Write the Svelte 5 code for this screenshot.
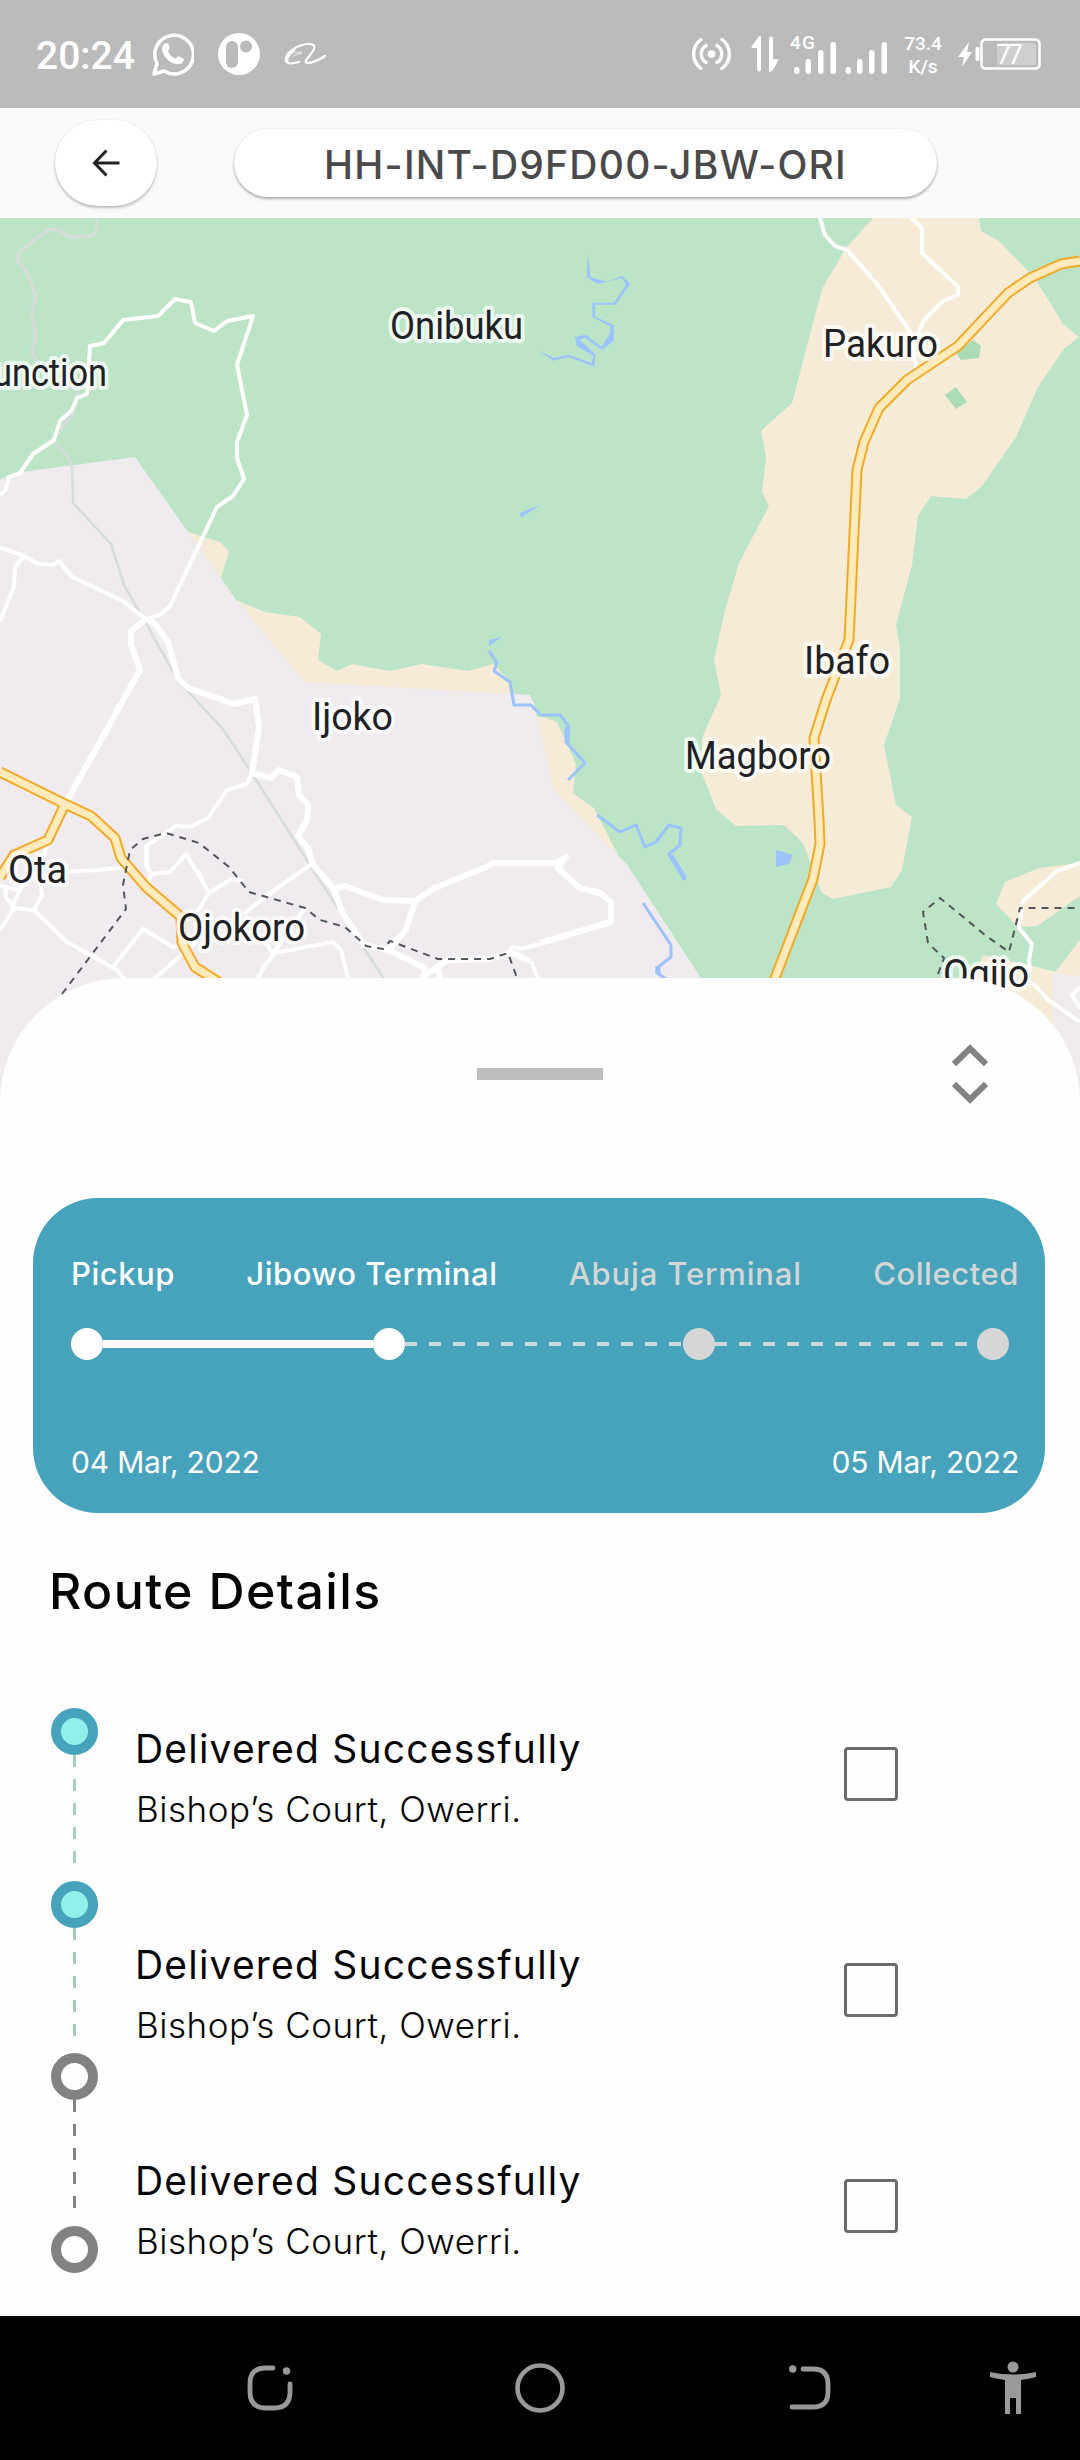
<script>
  const stops = [
    { label: 'Pickup', reached: true },
    { label: 'Jibowo Terminal', reached: true },
    { label: 'Abuja Terminal', reached: false },
    { label: 'Collected', reached: false }
  ];
  const nodes = [true, true, false, false];
  const deliveries = [1, 2, 3].map((id) => ({
    id,
    title: 'Delivered Successfully',
    place: 'Bishop’s Court, Owerri.'
  }));
  const places = [
    { name: 'unction', x: -7, y: 386, w: 114 },
    { name: 'Onibuku', x: 390, y: 339, w: 133 },
    { name: 'Pakuro', x: 823, y: 357, w: 115 },
    { name: 'Ibafo', x: 804, y: 674, w: 86 },
    { name: 'Magboro', x: 685, y: 769, w: 146 },
    { name: 'Ijoko', x: 312, y: 730, w: 81 },
    { name: 'Ota', x: 8, y: 883, w: 59 },
    { name: 'Ojokoro', x: 178, y: 941, w: 127 },
    { name: 'Ogijo', x: 943, y: 987, w: 86 }
  ];
</script>

<div class="screen">
  <div class="status">
    <span class="time">20:24</span>
    <svg class="whatsapp" width="42" height="44" viewBox="0 0 42 44" fill="none">
      <path d="M2 42 5 31.500A19.300 19.300 0 1 1 12 39Z" stroke="#fff" stroke-width="3.600" stroke-linejoin="round" />
      <path d="M13 11.500c2-.7 3.200-.2 3.800 1.500l1 3c.3 1.200-2 2.400-1.700 3.400 1.500 3.200 4 5.600 7.200 7 1.200.4 2.300-2.500 3.700-2l4.400 2.200c1 .7.300 3.200-1.400 4.500-2.400 1.800-6 1.500-9.700-.3-5-2.400-8.500-6.400-9.900-11-1-3.400.3-7.400 2.600-8.300Z" fill="#fff" />
    </svg>
    <svg class="pay" width="42" height="42" viewBox="0 0 42 42">
      <circle cx="21" cy="21" r="21" fill="#fff" />
      <rect x="8" y="8" width="12" height="27" rx="6" fill="#bbb" />
      <circle cx="28" cy="13.500" r="6" fill="#bbb" />
    </svg>
    <svg class="shop" width="43" height="24" viewBox="0 0 43 24" fill="none" stroke="#fff" stroke-linecap="round" stroke-linejoin="round">
      <path d="M15 20C8 22 3 22 2 19 0 12 13 2 25 2c8 0 6 5 1 11-3 4-6 7-3 8 4 0 12-3 18-7" stroke-width="2.200" />
      <path d="M10 8C5 12 2 16 3 19" stroke-width="3" />
      <path d="M11 11l6-1M9 14c5-2 8-2 9-3" stroke-width=".8" />
    </svg>
    <span class="spring"></span>
    <svg class="hotspot" width="39" height="34" viewBox="0 0 39 34" fill="none" stroke="#fff" stroke-width="3.400" stroke-linecap="round">
      <circle cx="19.500" cy="17" r="3.800" fill="#fff" stroke="none" />
      <path d="M14 8.500a10 10 0 0 0 0 17M25 8.500a10 10 0 0 1 0 17M9 2.500a18 18 0 0 0 0 29M30 2.500a18 18 0 0 1 0 29" />
    </svg>
    <svg class="data" width="28" height="38" viewBox="0 0 28 38" fill="#fff">
      <path d="M7 2.500Q10-.5 10 3V35q-2 3-4 0V13H1Q0 12 1 11ZM18 3q2-3 4 0V24h4q2 1 1 2L22 35q-4 4-4 0Z" />
    </svg>
    <svg class="signal" width="100" height="44" viewBox="0 0 100 44" fill="#fff">
      <text x="0" y="17" class="net" textLength="25">4G</text>
      <rect x="4" y="35" width="5.500" height="7" rx="2.700" /><rect x="15.500" y="27" width="5.500" height="15" rx="2.700" />
      <rect x="28" y="18" width="5.500" height="24" rx="2.700" /><rect x="40.500" y="10" width="5.500" height="32" rx="2.700" />
      <rect x="55.500" y="35" width="5.500" height="7" rx="2.700" /><rect x="67" y="27" width="5.500" height="15" rx="2.700" />
      <rect x="79" y="18" width="5.500" height="24" rx="2.700" /><rect x="91.500" y="10" width="5.500" height="32" rx="2.700" />
    </svg>
    <span class="speed"><span>73.4</span><span>K/s</span></span>
    <svg class="battery" width="84" height="34" viewBox="0 0 84 34">
      <path d="M11 5 0 20h6L4 30 14 15H9Z" fill="#fff" />
      <rect x="17.500" y="10" width="4" height="14" rx="2" fill="#fff" />
      <rect x="23.500" y="2.500" width="58" height="29" rx="4" fill="none" stroke="#fff" stroke-width="2.500" />
      <rect x="39" y="6" width="39" height="22" rx="2" fill="#fff" opacity=".3" />
      <text x="38" y="26.500" class="level" textLength="27">77</text>
    </svg>
  </div>

  <header>
    <button class="back" aria-label="Back">
      <svg width="28" height="28" viewBox="0 0 28 28" fill="none" stroke="#222" stroke-width="3">
        <path d="M27.500 14H2.500M14.500 1.500 2.500 14 14.500 26.500" />
      </svg>
    </button>
    <div class="code"><span>HH-INT-D9FD00-JBW-ORI</span></div>
  </header>

  <svg class="map" width="1080" height="892" viewBox="0 218 1080 892">
    <rect y="218" width="1080" height="892" fill="#bce4c7" />
    <!-- land -->
    <g fill="#f6ebd6">
      <path d="M188 532 220 542 229 551 221 578ZM236 600 265 612 300 617 321 634 318 660 337 671 352 664 390 671 422 664 468 671 493 664 501 672 510 682 510 696 305 684ZM534 716 547 718 557 722 576 764 573 793 594 808 619 857 550 792Z" />
      <path d="M873 218 846 248 822 289 792 403 761 431 766 457 762 492 769 506 739 563 725 610 714 660 721 695 702 738 702 774 716 809 736 826 784 825 803 843 812 867 822 893 833 899 891 887 902 870 912 817 896 805 884 745 900 698 900 648 896 625 912 565 918 516 931 496 966 499 982 486 1016 437 1038 387 1064 349 1079 337 1063 324 1036 280 1029 272 999 241 981 231 979 218Z" />
      <path d="M1080 863 1039 868 1005 882 996 904 1018 927 1037 926 1080 896ZM1080 940 1055 972 1033 966 983 955 970 985 1020 1030 1080 1050Z" />
    </g>
    <path d="M0 479 21 472 135 457 188 532 221 578 236 600 305 682 510 694 530 695 535 706 541 734 554 790 617 855 626 863 701 978 790 1110H0ZM1052 974 1080 976V1110H1060L1053 1018Z" fill="#efebef" />
    <path d="M956 353 973 340 981 346 979 358 961 360ZM945 395 956 387 967 402 956 409Z" fill="#abdcb7" />
    <!-- water -->
    <g transform="translate(540 210) scale(.34437 .33333)" fill="#9cc3fb">
      <path d="M139 135 147 202 193 215 240 198 261 222 220 284H160V320L214 345V393L180 420 130 383 115 390 161 433 158 470 82 441 38 452 0 423 39 444 82 434 150 459 155 438 107 408 101 381 133 374 179 410 204 370V349L152 322V278H215L250 224 238 205 168 222 136 202Z" />
    </g>
    <path d="M520 513 540 505 521 518ZM489 640 502 637 489 646ZM776 850 793 855 789 864 776 867Z" fill="#9cc3fb" />
    <g fill="none" stroke="#9cc3fb" stroke-width="3" stroke-linejoin="round">
      <path d="M489 651 497 663 494 671 510 682 514 705H531L540 714M540 715H560L569 727 567 743 585 763 568 780" />
      <path d="M597 815 620 832 636 825 645 847 656 842 669 825 681 828 680 845 669 854 685 880M643 903 671 945V957L657 968V973L666 979" />
      <path d="M567 727V743M671 856 685 879M658 966V974" stroke-width="5" />
    </g>
    <!-- railway and boundary -->
    <g fill="none" stroke="#d5dcda" stroke-width="4" stroke-linejoin="round">
      <path d="M97 218V230L92 236 71 237 56 229 48 230 19 252 18 262 27 272 36 297 32 313 36 337 32 352 40 368 78 391 72 415 60 430" stroke-width="3.500" />
      <path d="M55 443 68 457 72 467 73 503 111 544 124 585 147 625 178 681 223 729 253 775 310 865 384 979" stroke-width="2.500" />
    </g>
    <!-- local roads -->
    <g fill="none" stroke="#fff" stroke-width="4" stroke-linejoin="round">
      <path d="M0 495 5 491 9 477 20 473 33 454 54 440 60 421 72 410 77 398 87 394 90 346 104 343 123 320 158 316 175 299 191 302 195 323 214 331 227 321 253 316 237 365 247 415 237 442V458L244 479 233 496 217 507 170 606 160 615 146 619 121 600 72 577 59 561 53 565 38 564 24 556 5 549 0 548M24 556 15 567 14 587 0 621" />
      <path d="M820 218 825 235 835 246 847 250 878 285 911 333 916 368M911 218 922 228V253L958 287V295L943 301 924 320 914 345" />
      <path d="M0 886 20 890 12 908 34 910 67 942 117 970 124 979M15 907 0 930M31 840 43 846M68 872 125 868M49 840 38 871 42 895 34 910M5 886 6 898 14 906M20 890 30 872M113 967 143 929 173 947 195 943 154 979M148 885 151 874 170 872 186 854 209 893 232 879 243 881M148 870 146 846 176 826 190 827 208 818 227 790 247 784 252 773M209 893 195 915 M258 978 265 965 275 953 333 942 341 950 348 978M310 865 265 897 244 914M305 908 273 954 263 938" />
      <path d="M151 874 146 865 147 847M198 870 204 884M507 955 512 947 520 949 540 944M531 961 538 978M1080 863 1057 871 1023 901 1019 928 1032 944 1029 960 1030 970 1025 981 1035 985 1047 999 1080 1022M1080 987 1072 995 1080 1008" />
      <g stroke-width="6">
        <path d="M146 619 131 631V645L140 670 67 801M146 619 155 624 168 642 178 678 188 688 234 704 255 699 259 727 252 773 271 778 279 770 297 777 299 795 308 805 307 820 298 836 308 848 313 865 334 889 345 886 383 900 415 901 435 888 486 867 493 863H558L566 857 558 868 574 883 580 888 600 893 611 902V922L540 943" />
        <path d="M334 889 342 912 364 945 388 950 425 968 423 980M415 901 406 930 388 950M425 975 448 960 488 959 512 953 530 961M438 967 440 980" />
      </g>
    </g>
    <!-- motorways -->
    <g fill="none" stroke-linejoin="round">
      {#each [['#f2aa26', 11], ['#feeaba', 7]] as [color, width]}
        <path d="M65 804 48 840 14 855 0 877M0 772 65 804 91 816 115 838 121 858 146 887 181 917 182 943 195 967 220 983M1080 261 1061 264 1030 278 1008 293 958 346 907 380 879 408 864 442 857 470 849 640 826 700 814 738 819 820 820 844 813 879 772 986" stroke={color} stroke-width={width} />
      {/each}
    </g>
    <g fill="none" stroke="#53585c" stroke-width="2" stroke-dasharray="7 6">
      <path d="M62 994 126 909 123 885 130 850 143 839 166 833 199 843 229 867 249 892 305 908 320 920 345 927 366 946 383 949 390 941 438 959H490L508 953 517 978M938 974 944 958 928 943 923 912 940 898 985 935 1009 952 1020 908H1080" />
    </g>
    {#each places as p}
      <text class="place" x={p.x} y={p.y} textLength={p.w} lengthAdjust="spacingAndGlyphs">{p.name}</text>
    {/each}
  </svg>

  <section class="sheet">
    <div class="grip">
      <span></span>
      <i class="handle"></i>
      <svg width="36" height="60" viewBox="0 0 36 60" fill="none" stroke="#828282" stroke-width="6">
        <path d="M2 20 18 4.500 34 20M2 40 18 55.500 34 40" />
      </svg>
    </div>

    <div class="card">
      <div class="labels">
        {#each stops as stop}
          <span class:pending={!stop.reached}>{stop.label}</span>
        {/each}
      </div>
      <div class="track">
        <b></b><i class="solid"></i><b></b><i class="dash mid"></i><b class="off"></b><i class="dash"></i><b class="off"></b>
      </div>
      <div class="dates"><span>04 Mar, 2022</span><span>05 Mar, 2022</span></div>
    </div>

    <h1>Route Details</h1>

    <div class="route">
      <div class="rail">
        {#each nodes as done, i}
          <span class="node" class:done></span>
          {#if i < nodes.length - 1}<span class="link" class:done></span>{/if}
        {/each}
      </div>
      <div class="list">
        {#each deliveries as d (d.id)}
          <div class="item">
            <div class="text">
              <div class="title">{d.title}</div>
              <div class="sub">{d.place}</div>
            </div>
            <span class="box" role="checkbox" aria-checked="false" aria-label="Select" tabindex="0"></span>
          </div>
        {/each}
      </div>
    </div>
  </section>

  <nav>
    <svg width="46" height="46" viewBox="0 0 46 46" fill="none" stroke="#999" stroke-width="4.800" stroke-linecap="round">
      <path d="M26 3H19Q3 3 3 18V27Q3 43 19 43H27Q43 43 43 27V19" /><circle cx="39.500" cy="6" r="3.700" fill="#999" stroke="none" />
    </svg>
    <svg class="home" width="50" height="50" viewBox="0 0 50 50" fill="none" stroke="#999" stroke-width="4.600"><circle cx="25" cy="25" r="22.500" /></svg>
    <svg class="prev" width="42" height="46" viewBox="0 0 42 46" fill="none" stroke="#999" stroke-width="4.800" stroke-linecap="round">
      <path d="M14 4H24Q39 4 39 19V27Q39 42 24 42H3" /><circle cx="3.700" cy="4" r="3.700" fill="#999" stroke="none" />
    </svg>
    <svg class="access" width="48" height="54" viewBox="0 0 48 54" fill="#999">
      <circle cx="24" cy="6" r="5.500" /><path d="M1 11Q24 16 47 11V16Q40 18 32 19V53H27V37H21V53H16V19Q8 18 1 16Z" />
    </svg>
  </nav>
</div>

<style>
  :global(body) { margin: 0; background: #fff; }
  .screen { width: 1080px; height: 2460px; display: flex; flex-direction: column; overflow: hidden; font-family: Inter, 'Noto Sans', sans-serif; }
  .status { height: 108px; box-sizing: border-box; padding: 0 38px 0 36px; background: #bbb; display: flex; align-items: center; color: #fff; font-family: Roboto, sans-serif; flex: none; }
  .status svg { flex: none; }
  .time { font-size: 39px; font-weight: 500; width: 116px; line-height: 44px; padding-top: 3px; }
  .pay { margin-left: 24px; }
  .shop { margin-left: 24px; }
  .spring { flex: 1; }
  .hotspot { margin-right: 20px; }
  .data { margin-right: 11px; }
  .signal { margin-right: 13px; }
  .net { font: 500 19px Roboto, sans-serif; }
  .level { font: 400 27px Roboto, sans-serif; fill: #fff; }
  .speed { display: flex; flex-direction: column; width: 40px; align-items: center; font-size: 19px; font-weight: 500; line-height: 23px; margin-right: 15px; padding-top: 2px; }
  header { height: 110px; box-sizing: border-box; flex: none; background: #fafafa; display: flex; align-items: center; padding-left: 55px; }
  .back { width: 102px; height: 86px; border: 0; border-radius: 43px; background: #fff; display: grid; place-items: center; padding: 0 1px 0 0; box-shadow: 0 2px 3px rgba(0, 0, 0, .25), 0 0 2px rgba(0, 0, 0, .08); }
  .code { margin-left: 77px; width: 703px; height: 68px; border-radius: 35px; background: #fff; display: flex; align-items: center; justify-content: center; box-shadow: 0 2px 3px rgba(0, 0, 0, .3), 0 0 2px rgba(0, 0, 0, .08); color: #4a4a4a; font-size: 39px; font-weight: 500; white-space: nowrap; }
  .code span { letter-spacing: 1.250px; padding-top: 2px; }
  .map { display: block; flex: none; }
  .place { font: 400 39px Roboto, sans-serif; fill: #202124; stroke: rgba(255, 255, 255, .72); stroke-width: 8px; stroke-linejoin: round; paint-order: stroke; }
  .sheet { position: relative; margin-top: -132px; height: 1338px; flex: none; background: #fefefe; border-radius: 124px 124px 0 0; overflow: hidden; box-sizing: border-box; padding: 0 35px 0 33px; }
  .grip { height: 219.500px; box-sizing: border-box; padding: 66px 57px 0 59px; display: grid; grid-template-columns: 1fr 126px 1fr; align-items: start; }
  .grip svg { justify-self: end; }
  .handle { height: 12px; background: #bebebe; margin-top: 24px; }
  .card { height: 315.500px; border-radius: 65px; background: #47a3bb; box-sizing: border-box; padding: 57px 26px 0 38px; color: #fff; }
  .labels { display: flex; justify-content: space-between; font-size: 31px; font-weight: 500; line-height: 38px; white-space: nowrap; letter-spacing: .550px; }
  .pending { color: #d4d6d7; }
  .pending:nth-child(3) { letter-spacing: .850px; }
  .track { display: flex; align-items: center; height: 32px; margin: 35px 0 0; }
  .track b { width: 32px; height: 32px; border-radius: 50%; background: #fff; flex: none; }
  .track b.off { background: #d6d6d6; }
  .solid { width: 270px; height: 8px; background: #fff; }
  .dash { width: 262px; height: 4px; background: repeating-linear-gradient(90deg, #cddadd 0 12px, transparent 12px 24px); }
  .dash.mid { width: 278px; }
  .dates { display: flex; justify-content: space-between; margin-top: 83px; font-size: 30px; letter-spacing: -.2px; line-height: 38px; white-space: nowrap; }
  h1 { margin: 46px 0 0 16px; font-size: 50px; font-weight: 500; line-height: 64px; letter-spacing: 1.400px; color: #050505; }
  .route { display: flex; margin-top: 85px; padding-left: 18px; }
  .rail { width: 47px; display: flex; flex-direction: column; align-items: center; }
  .node { width: 47px; height: 47px; box-sizing: border-box; border: 10px solid #828282; border-radius: 50%; flex: none; }
  .node.done { border-color: #47a3bb; background: #91f0e9; }
  .link { width: 3px; height: 125.600px; flex: none; background: repeating-linear-gradient(#828282 0 12px, transparent 12px 24px); background-size: 3px 112px; background-repeat: no-repeat; }
  .link.done { background-image: repeating-linear-gradient(#a5cdb8 0 12px, transparent 12px 24px); }
  .list { margin-left: 37px; padding-top: 16px; }
  .item { display: flex; height: 216px; }
  .text { width: 709px; white-space: nowrap; color: #050505; }
  .title { font-size: 39px; line-height: 50px; letter-spacing: 1.200px; }
  .sub { font-size: 35px; font-weight: 300; line-height: 44px; margin-top: 13px; letter-spacing: .550px; padding-left: 1px; }
  .box { width: 54px; height: 54px; box-sizing: border-box; border: 3px solid #6b6b6b; border-radius: 4px; margin-top: 22.500px; }
  nav { height: 144px; flex: none; background: #000; display: flex; align-items: center; padding-left: 247px; }
  .home { margin-left: 222px; }
  .prev { margin-left: 224px; }
  .access { margin-left: 158px; }
</style>
